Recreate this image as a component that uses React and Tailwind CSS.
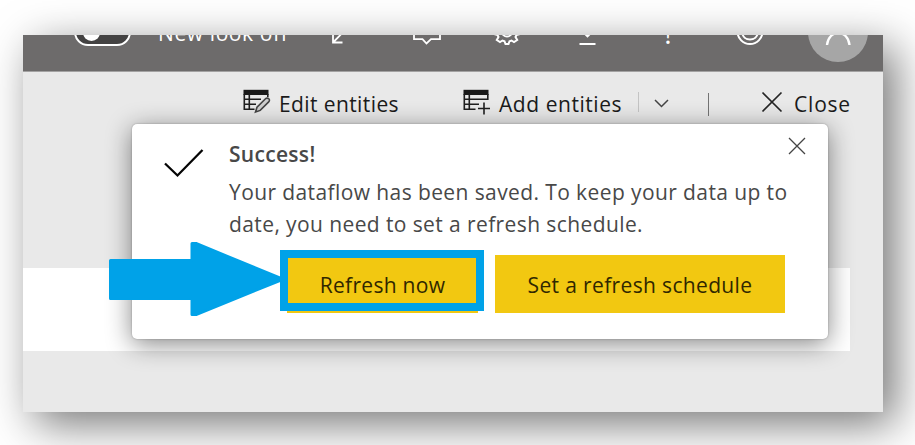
function TableIcon({ children }) {
  return (
    <svg className="mb-1.5 h-[26px] w-7 shrink-0" viewBox="0 0 28 26" fill="none" stroke="#1f1f1f" strokeWidth="1.6">
      <rect x="0.5" y="0.8" width="25" height="5.2" fill="#1a1a1a" stroke="none" />
      {children}
    </svg>
  );
}

function EditTableIcon() {
  return (
    <TableIcon>
      <path d="M1.3 5V20.3H11.5M6.3 5V20.3M1 10.3H18M1 15.3H13M24.8 5V8" />
      <path d="M12.5 23L14 18.3L22.5 9.8C23.6 8.7 25 9 25.8 9.8C26.7 10.7 26.7 11.9 25.7 12.9L17.2 21.4Z" stroke="#444" fill="#cfcfcf" />
    </TableIcon>
  );
}

function AddTableIcon() {
  return (
    <TableIcon>
      <path d="M1.3 5V20.3H12.5M6.3 5V20.3M1 10.3H24.8M1 15.3H16M24.8 5V11" />
      <path d="M21 13.5V25.5M15 19.5H27" />
    </TableIcon>
  );
}

function Header() {
  return (
    <header className="h-[37px] overflow-hidden border-b border-[#a3a2a2] bg-[#6d6b6b] text-white">
      <div className="-mt-[35px] flex h-16 items-center">
        <div className="ml-[51px] flex h-7 w-[57px] shrink-0 items-center rounded-full border-2 border-white bg-[#434242] px-[7px]">
          <div className="h-[17px] w-[17px] rounded-full bg-white" />
        </div>
        <span className="ml-[27px] w-[130px] shrink-0 whitespace-nowrap pt-px text-[21px] leading-7 tracking-[0.6px]">New look off</span>
        <svg className="ml-[42px] h-7 w-7 shrink-0" viewBox="0 0 28 28" fill="none" stroke="white" strokeWidth="1.8">
          <path d="M3 15V24.5H12.5M3 24.5L24 3M15 3H24V12" />
        </svg>
        <svg className="ml-[53px] h-7 w-8 shrink-0" viewBox="0 0 32 28" fill="none" stroke="white" strokeWidth="1.8">
          <path d="M3 3H29V21.2H20L15.5 25.5L11.5 21.2H3Z" />
        </svg>
        <svg className="ml-[50px] h-7 w-7 shrink-0" viewBox="0 0 28 28" fill="none" stroke="white" strokeWidth="2">
          <circle cx="14" cy="13.5" r="5" />
          <path d="M12 1H16L17 4.5L19.5 5.5L22.6 3.8L25 7L23 10L24 12H27V16L23.5 17L22.5 19L24.2 22L21 24L18.5 22.5L16.5 23.2L15.5 26H12.5L11.5 23.2L9.5 22.5L7 24L3.8 22L5.5 19L4.5 17L1 16V12H4L5 10L3 7L5.4 3.8L8.5 5.5L11 4.5Z" />
        </svg>
        <svg className="ml-[54px] h-7 w-7 shrink-0" viewBox="0 0 28 28" fill="none" stroke="white" strokeWidth="1.8">
          <path d="M12.5 0V18M5 11L12.5 18.5L20 11M4.5 26H20.5" />
        </svg>
        <span className="ml-[61px] w-2 shrink-0 pt-px text-center text-[28px] leading-7">!</span>
        <svg className="ml-[64px] h-7 w-7 shrink-0" viewBox="0 0 28 28" fill="none" stroke="white" strokeWidth="2">
          <circle cx="14" cy="13.5" r="12.5" />
          <path d="M6 14C7 24 21 24 22 14" />
          <path d="M9 8V11M19 8V11" />
        </svg>
        <div className="ml-[44px] flex h-[60px] w-[60px] shrink-0 justify-center rounded-full bg-[#a6a6a6]">
          <svg className="h-[60px] w-[60px]" viewBox="0 0 60 60" fill="none" stroke="white" strokeWidth="2.4">
            <circle cx="30" cy="22" r="8" />
            <path d="M19 43C20.5 27 40 27 41.5 43" />
          </svg>
        </div>
      </div>
    </header>
  );
}

function Toolbar() {
  return (
    <nav className="flex h-[65px] items-center pl-[220px] text-[21px] tracking-[0.4px] text-[#1b1b1b]">
      <EditTableIcon />
      <span className="ml-[8px] w-[119px] shrink-0 whitespace-nowrap pt-px">Edit entities</span>
      <span className="ml-[65px] flex"><AddTableIcon /></span>
      <span className="ml-[8px] w-[123px] shrink-0 whitespace-nowrap pt-px tracking-[0.55px]">Add entities</span>
      <div className="mb-1.5 ml-[16px] h-5 w-px bg-[#c4c4c4]" />
      <svg className="mb-1 ml-[15px] h-3 w-4" viewBox="0 0 16 12" fill="none" stroke="#444" strokeWidth="1.5">
        <path d="M1 3L7.5 9.5L14 3" />
      </svg>
      <div className="ml-[38px] h-[23px] w-px bg-[#737373]" />
      <svg className="mb-1.5 ml-[52px] h-[22px] w-[22px]" viewBox="0 0 22 22" fill="none" stroke="#252525" strokeWidth="1.7">
        <path d="M1.5 1.5L20.5 20.5M20.5 1.5L1.5 20.5" />
      </svg>
      <span className="ml-[11px] pt-px tracking-[0.8px]">Close</span>
    </nav>
  );
}

function SuccessDialog() {
  return (
    <section className="absolute left-[109px] top-[89px] flex h-[215px] w-[696px] rounded-[5px] bg-white pl-8 pr-8 pt-4 text-[21px] tracking-[0.4px] text-[#484848] shadow-[0_5px_26px_rgba(0,0,0,0.48),0_0_2px_rgba(0,0,0,0.3)]">
      <svg className="mt-2 h-[30px] w-[40px] shrink-0" viewBox="0 0 40 30" fill="none" stroke="#050505" strokeWidth="2.3">
        <path d="M1 15.5L13.5 27.5L38.5 2" />
      </svg>
      <div className="ml-[25px]">
        <div className="flex h-[28px] items-center justify-between">
          <h2 className="pt-0.5 font-semibold tracking-[0.3px]">Success!</h2>
          <svg className="-mt-4 mr-[-18px] h-[18px] w-[18px]" viewBox="0 0 18 18" fill="none" stroke="#454545" strokeWidth="1.3">
            <path d="M1 1L17 17M17 1L1 17" />
          </svg>
        </div>
        <p className="mt-[8px] whitespace-nowrap leading-8">
          Your dataflow has been saved. To keep your data up to
          <br />
          date, you need to set a refresh schedule.
        </p>
        <div className="ml-[58px] mt-[15px] flex gap-[17px] text-[#302700]">
          <button className="relative h-[58px] w-[191px] bg-[#f2c811] pt-[3px] tracking-[0.3px]">
            Refresh now
            <span className="absolute -left-[7px] -top-[5px] h-[61px] w-[204px] border-8 border-[#00a2e8]" />
          </button>
          <button className="h-[58px] w-[290px] bg-[#f2c811] pt-[3px] tracking-[0.35px]">Set a refresh schedule</button>
        </div>
      </div>
    </section>
  );
}

export default function App() {
  return (
    <div className="h-[445px] w-[915px] overflow-hidden bg-white pl-[23px] pt-[35px] font-['Open_Sans','Noto_Sans',sans-serif]">
      <main className="relative h-[377px] w-[860px] bg-[#e9e9e9] shadow-[12px_12px_42px_rgba(0,0,0,0.54)]">
        <Header />
        <Toolbar />
        <div className="mt-[131px] h-[83px] w-[827px] bg-white" />
        <SuccessDialog />
        <svg className="absolute left-[86px] top-[206px] h-[76px] w-[174px]" viewBox="0 0 174 76" fill="#00a2e8" stroke="#00a2e8" strokeWidth="3" strokeLinejoin="round">
          <path d="M1.5 19.5H83V2.5H87L172 37.5V39L87 73.5H83V57.5H1.5Z" />
        </svg>
      </main>
    </div>
  );
}
